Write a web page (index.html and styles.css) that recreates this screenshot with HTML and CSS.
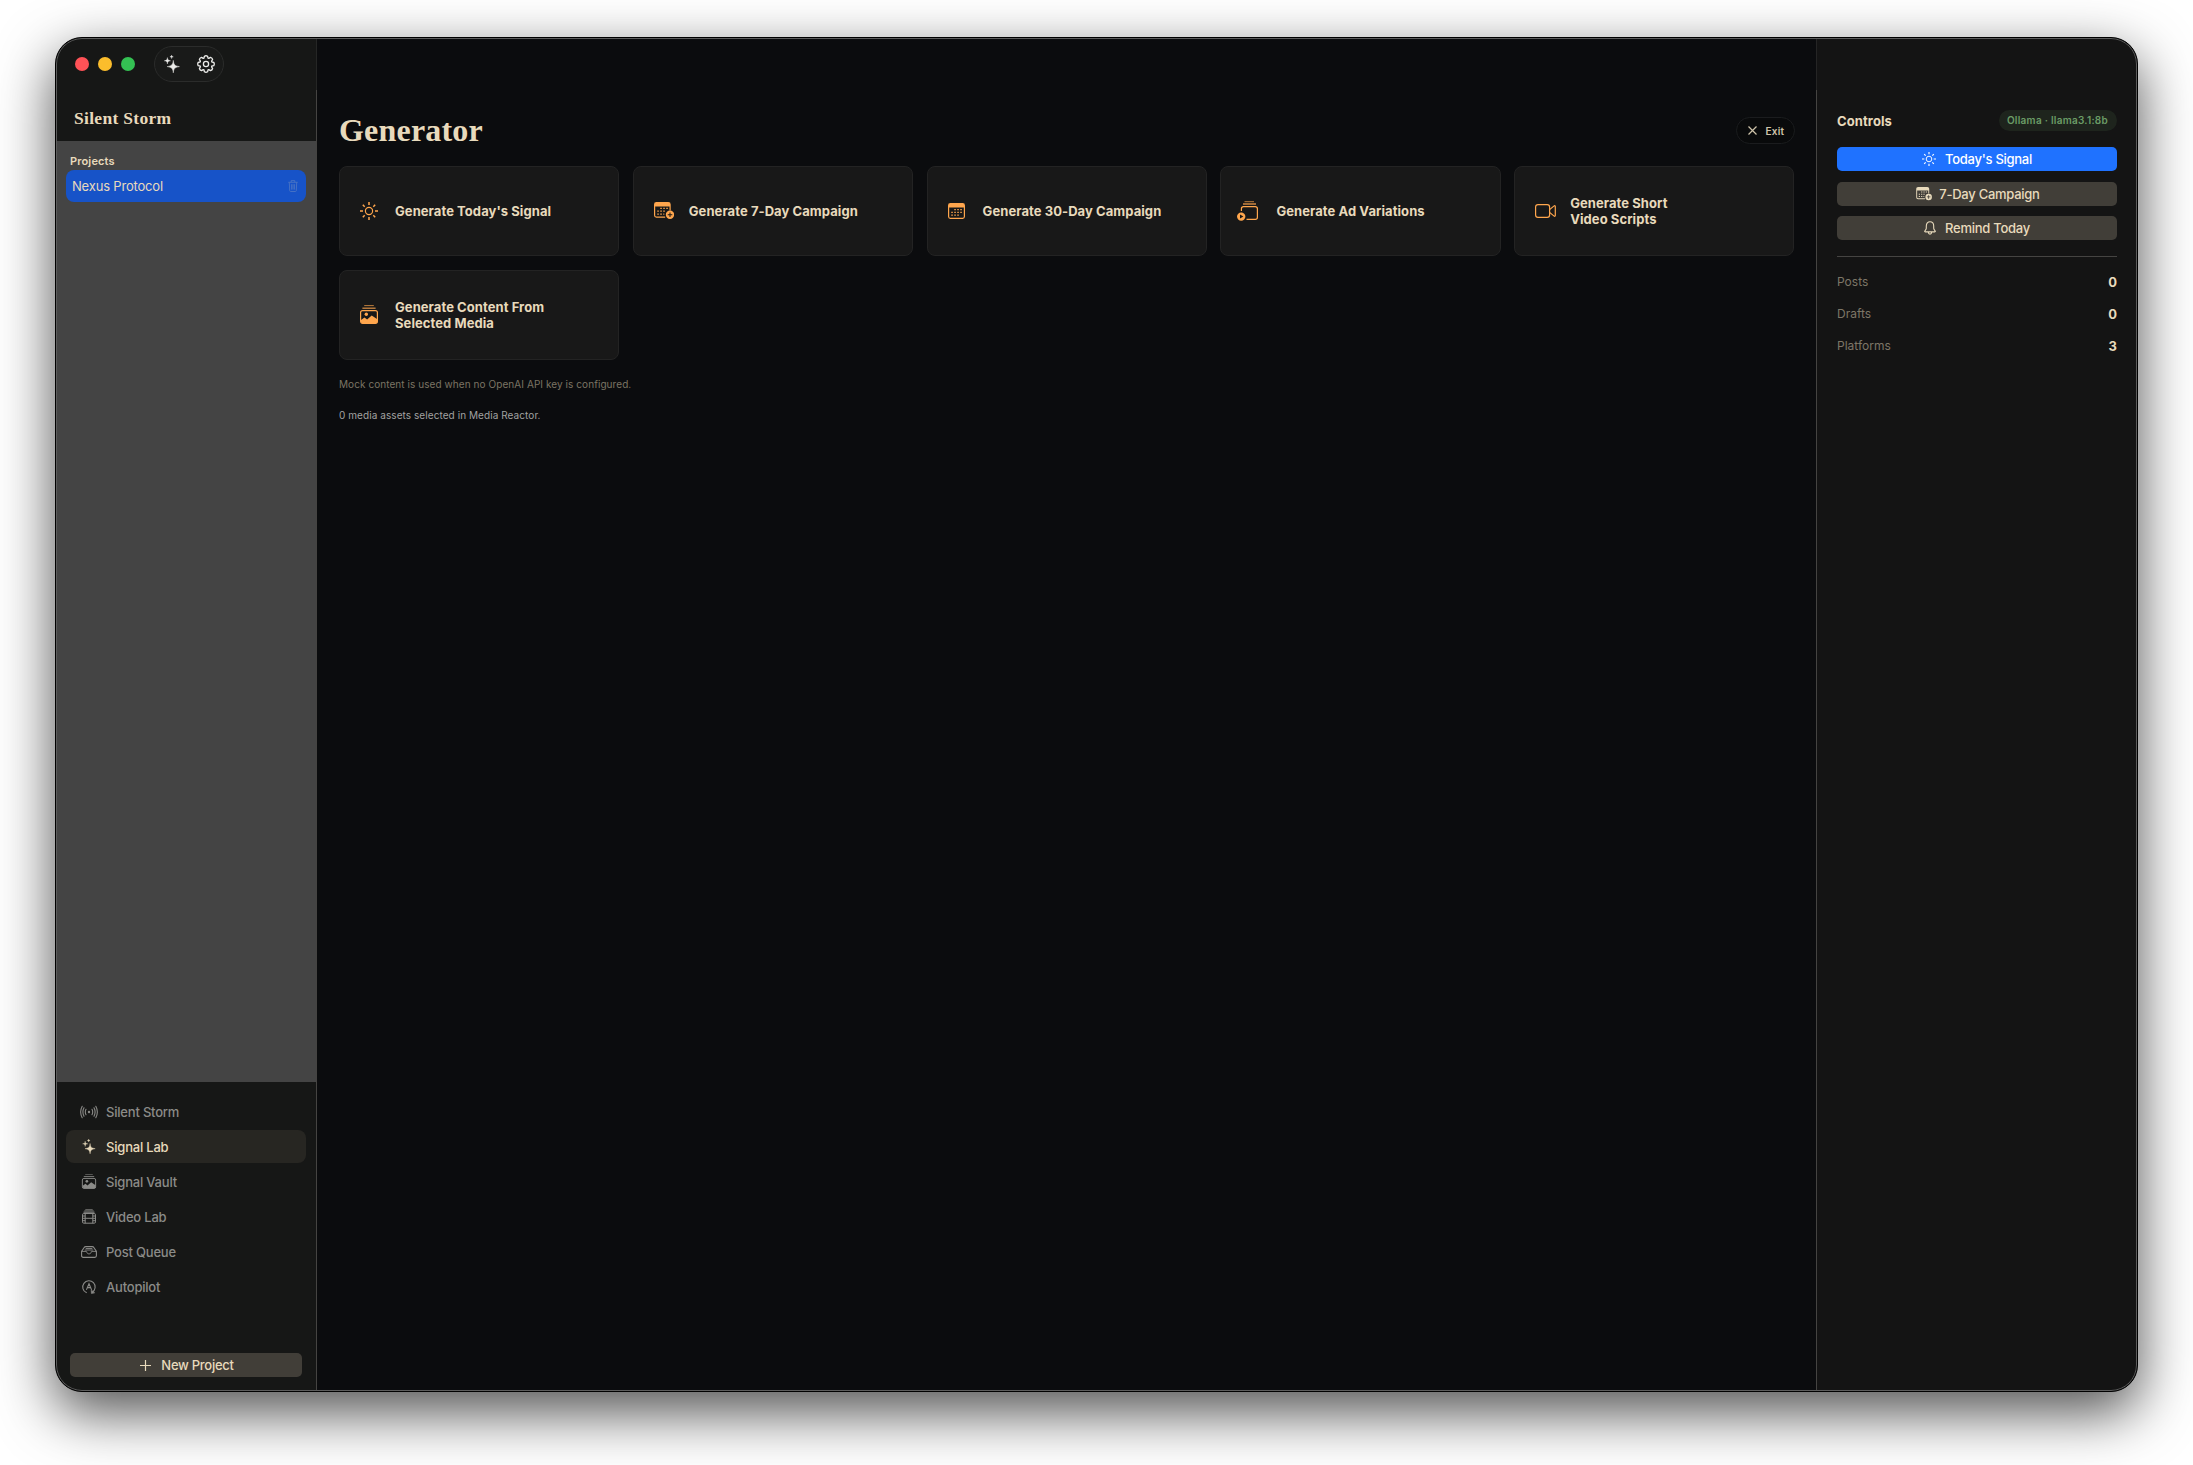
FILE: index.html
```html
<!DOCTYPE html>
<html lang="en">
<head>
    <meta charset="UTF-8">
    <title>Silent Storm</title>
    <link rel="stylesheet" href="styles.css">
</head>
<body>
    <svg class="sprite" width="0" height="0">
        <symbol id="sparkles" viewBox="0 0 16 18">
            <path fill="currentColor" d="M9.3 5.4C9.8 9.6 10.5 10.8 15.4 11.6C10.5 12.4 9.8 13.7 9.3 17.8C8.8 13.7 8.1 12.4 3.2 11.6C8.1 10.8 8.8 9.6 9.3 5.4Z" stroke="currentColor" stroke-width=".5"/>
            <path fill="currentColor" d="M3.4 2.6C3.7 4.9 4 5.3 6.5 5.8C4 6.2 3.7 6.7 3.4 9C3.1 6.7 2.8 6.2 .3 5.8C2.8 5.3 3.1 4.9 3.4 2.6Z" stroke="currentColor" stroke-width=".4"/>
            <path fill="currentColor" d="M7.6 0C7.8 1.3 8 1.6 9.3 1.8C8 2 7.8 2.3 7.6 3.6C7.4 2.3 7.2 2 5.9 1.8C7.2 1.6 7.4 1.3 7.6 0Z" stroke="currentColor" stroke-width=".4"/>
        </symbol>
        <symbol id="sun" viewBox="0 0 18 18">
            <circle cx="9" cy="9" r="3.6" fill="none" stroke="currentColor" stroke-width="1.2"/>
            <path fill="none" stroke="currentColor" stroke-width="1.5" d="M9 0v3M9 15v3M0 9h3M15 9h3M2.8 2.8l1.9 1.9M13.3 13.3l1.9 1.9M2.8 15.2l1.9-1.9M13.3 4.7l1.9-1.9"/>
        </symbol>
        <symbol id="calendar-plus" viewBox="0 0 20 18">
            <path fill="currentColor" d="M2.4 0h11.9a2.4 2.4 0 0 1 2.4 2.4v6h-1.2V4.6H1.2v8.6c0 .8.5 1.3 1.3 1.3h8.7v1.2H2.4A2.4 2.4 0 0 1 0 13.3V2.4A2.4 2.4 0 0 1 2.4 0z"/>
            <path stroke="currentColor" stroke-width="1.3" stroke-dasharray="1.5 1.5" d="M6.3 6.3h7.5M3.3 9.2h9M3.3 12.1h7"/>
            <path fill="currentColor" fill-rule="evenodd" d="M16 8.6a4.2 4.2 0 1 1 0 8.4a4.2 4.2 0 0 1 0-8.400zM15.5 10.500v1.800h-1.800v1h1.800v1.800h1v-1.800h1.800v-1h-1.800v-1.800z"/>
        </symbol>
        <symbol id="stack-image" viewBox="0 0 18 19">
            <path fill="none" stroke="currentColor" stroke-width="1" opacity=".7" d="M4.2 .6h9.600"/>
            <path fill="none" stroke="currentColor" stroke-width="1.3" opacity=".8" d="M2.4 3.2h13.200"/>
            <rect x=".6" y="5.6" width="16.8" height="12.7" rx="2" fill="none" stroke="currentColor" stroke-width="1.2"/>
            <circle cx="6.3" cy="9.3" r="1.7" fill="currentColor"/>
            <path fill="currentColor" d="M1 15l3.500-2.500 2.600 2 4.600-4 5.700 3.800v2.200c0 1-.6 1.500-1.500 1.500H2.500c-.9 0-1.500-.5-1.500-1.500z"/>
        </symbol>
    </svg>

    <div class="window">
        <aside class="sidebar">
            <div class="titlebar">
                <span class="light light-red"></span>
                <span class="light light-yellow"></span>
                <span class="light light-green"></span>
                <div class="toolbar">
                    <svg width="16" height="18"><use href="#sparkles"/></svg>
                    <svg width="18" height="18" viewBox="0 0 18 18" fill="none" stroke="currentColor" stroke-width="1.3" stroke-linejoin="round">
                        <path d="M7.4 1.2Q9 .3 10.6 1.2L11 3.1L11.8 3.4L13.5 2.4Q15.2 2.9 15.6 4.5L14.6 6.2L14.9 7L16.8 7.4Q17.7 9 16.8 10.6L14.9 11L14.6 11.8L15.6 13.5Q15.2 15.2 13.5 15.6L11.8 14.6L11 14.9L10.6 16.8Q9 17.7 7.4 16.8L7 14.9L6.2 14.6L4.5 15.6Q2.8 15.2 2.4 13.5L3.4 11.8L3.1 11L1.2 10.6Q.3 9 1.2 7.4L3.1 7L3.4 6.2L2.4 4.5Q2.8 2.8 4.5 2.4L6.2 3.4L7 3.1Z"/>
                        <circle cx="9" cy="9" r="2.6"/>
                    </svg>
                </div>
            </div>
            <div class="brand">Silent Storm</div>
            <div class="projects">
                <div class="projects-label">Projects</div>
                <div class="project">
                    <span>Nexus Protocol</span>
                    <svg width="10" height="12" viewBox="0 0 10 12" fill="none" stroke="currentColor" stroke-width=".9">
                        <path d="M.3 2.3h9.4M3.2 2.3V.6h3.600v1.700M1.300 2.300l.4 8.400c0 .5.400.8.900.8h4.800c.5 0 .9-.3.900-.8l.4-8.400M3.600 4.200v5.400M5 4.200v5.400M6.400 4.200v5.400"/>
                    </svg>
                </div>
            </div>
            <nav class="nav">
                <a class="nav-item">
                    <svg width="18" height="14" viewBox="0 0 18 14" fill="none" stroke="currentColor" stroke-width="1.1" stroke-linecap="round">
                        <circle cx="9" cy="7" r="1.2" fill="currentColor" stroke="none"/>
                        <path d="M6 4.3Q4.6 7 6 9.7M12 4.3Q13.4 7 12 9.7M4 2.8Q1.8 7 4 11.2M14 2.8Q16.2 7 14 11.2M2.2 1.3Q-.9 7 2.2 12.7M15.8 1.3Q18.9 7 15.8 12.7"/>
                    </svg>
                    <span>Silent Storm</span>
                </a>
                <a class="nav-item active">
                    <svg width="13" height="15"><use href="#sparkles"/></svg>
                    <span>Signal Lab</span>
                </a>
                <a class="nav-item">
                    <svg width="14" height="15"><use href="#stack-image"/></svg>
                    <span>Signal Vault</span>
                </a>
                <a class="nav-item">
                    <svg width="14" height="15" viewBox="0 0 14 15" fill="none" stroke="currentColor">
                        <path stroke-width="1" opacity=".7" d="M3.3 .6h7.400M2.300 1.800h9.400"/>
                        <path stroke-width="1.4" opacity=".8" d="M1.5 3.2h11"/>
                        <rect x=".5" y="4.5" width="13" height="9.7" rx="1.3"/>
                        <path d="M3.2 4.5v9.700M10.800 4.500v9.700M3.200 9.300h7.600M.5 7h2.700M.5 9.300h2.700M.5 11.700h2.700M10.800 7h2.700M10.800 9.300h2.700M10.800 11.700h2.700"/>
                    </svg>
                    <span>Video Lab</span>
                </a>
                <a class="nav-item">
                    <svg width="16" height="12" viewBox="0 0 16 12" fill="none" stroke="currentColor" stroke-width="1.1" stroke-linejoin="round">
                        <path d="M.6 5.4L3 1.7C3.5.9 4 .6 4.8.6h6.400c.8 0 1.300.3 1.800 1.100l2.400 3.700v4.400c0 1-.6 1.600-1.600 1.600H2.200c-1 0-1.600-.6-1.600-1.600z"/>
                        <path d="M.6 5.4h4.700c.3 0 .5.200.5.500 0 1.100.9 2 2.200 2s2.200-.9 2.200-2c0-.3.200-.5.500-.5h4.700M4.700 2.500h6.600M3.700 4h8.600" stroke-width=".9"/>
                    </svg>
                    <span>Post Queue</span>
                </a>
                <a class="nav-item">
                    <svg width="14" height="14" viewBox="0 0 14 14" fill="none" stroke="currentColor" stroke-width="1.1" stroke-linecap="round">
                        <path d="M4.3 12.6A6.2 6.2 0 1 1 10.3 12.2M4.6 9.4L7 3.7l2.400 5.700M5.400 7.600h3.200"/>
                        <path fill="currentColor" stroke-width=".6" d="M9.2 10.2l.2 3.300 3-.6z"/>
                    </svg>
                    <span>Autopilot</span>
                </a>
            </nav>
            <button class="button new-project">
                <svg width="11" height="11" viewBox="0 0 11 11" stroke="currentColor" stroke-width="1.2"><path d="M5.5 0v11M0 5.5h11"/></svg>
                <span>New Project</span>
            </button>
        </aside>

        <main class="main">
            <div class="main-header">
                <h1>Generator</h1>
                <button class="exit">
                    <svg width="9" height="9" viewBox="0 0 9 9" stroke="currentColor" stroke-width="1.2"><path d="M.5 .5l8 8M8.5 .5l-8 8"/></svg>
                    <span>Exit</span>
                </button>
            </div>
            <div class="cards">
                <div class="card">
                    <div class="card-icon"><svg width="18" height="18"><use href="#sun"/></svg></div>
                    <span>Generate Today's Signal</span>
                </div>
                <div class="card">
                    <div class="card-icon icon-week"><svg width="20" height="18"><use href="#calendar-plus"/></svg></div>
                    <span>Generate 7-Day Campaign</span>
                </div>
                <div class="card">
                    <div class="card-icon">
                        <svg width="17" height="16" viewBox="0 0 17 16">
                            <path fill="currentColor" fill-rule="evenodd" d="M2.4 0h12.2A2.4 2.4 0 0 1 17 2.4v11.200a2.4 2.4 0 0 1-2.4 2.4H2.4A2.4 2.4 0 0 1 0 13.600V2.4A2.4 2.4 0 0 1 2.4 0zM1.200 4.600v8.900c0 .8.500 1.300 1.300 1.300h12c.8 0 1.300-.5 1.300-1.300V4.600z"/>
                            <path stroke="currentColor" stroke-width="1.3" stroke-dasharray="1.5 1.5" d="M6.3 6.6h7.500M3.300 9.400h10.500M3.300 12.200h7.500"/>
                        </svg>
                    </div>
                    <span>Generate 30-Day Campaign</span>
                </div>
                <div class="card">
                    <div class="card-icon icon-ads">
                        <svg width="21" height="20" viewBox="0 0 21 20" fill="none" stroke="currentColor">
                            <path opacity=".7" d="M7.5 .7h9.500"/>
                            <path stroke-width="1.3" opacity=".8" d="M6 3h13"/>
                            <path stroke-width="1.2" d="M4.4 10V7.8c0-1.300.8-2.100 2.100-2.100h11.800c1.300 0 2.100.8 2.100 2.100v8.400c0 1.300-.8 2.100-2.100 2.100H9.500"/>
                            <path fill="currentColor" fill-rule="evenodd" stroke="none" d="M4.2 11.4a4.2 4.2 0 1 1 0 8.400a4.2 4.2 0 0 1 0-8.400zM3 13.600v4l3.400-2z"/>
                        </svg>
                    </div>
                    <span>Generate Ad Variations</span>
                </div>
                <div class="card">
                    <div class="card-icon icon-video">
                        <svg width="21" height="14" viewBox="0 0 21 14" fill="none" stroke="currentColor" stroke-width="1.2" stroke-linejoin="round">
                            <rect x=".6" y=".6" width="14" height="12.8" rx="2.4"/>
                            <path d="M14.6 5.6l4.500-3.700c.6-.4 1.200-.2 1.200.5v9.200c0 .7-.6.900-1.200.5l-4.500-3.700"/>
                        </svg>
                    </div>
                    <span>Generate Short<br>Video Scripts</span>
                </div>
                <div class="card">
                    <div class="card-icon icon-media"><svg width="18" height="19"><use href="#stack-image"/></svg></div>
                    <span>Generate Content From<br>Selected Media</span>
                </div>
            </div>
            <p class="note">Mock content is used when no OpenAI API key is configured.</p>
            <p class="note selected">0 media assets selected in Media Reactor.</p>
        </main>

        <aside class="controls">
            <div class="controls-titlebar"></div>
            <div class="controls-header">
                <h2>Controls</h2>
                <div class="badge">Ollama · llama3.1:8b</div>
            </div>
            <button class="button primary">
                <svg width="14" height="14"><use href="#sun"/></svg>
                <span>Today's Signal</span>
            </button>
            <button class="button campaign">
                <svg width="16" height="14"><use href="#calendar-plus"/></svg>
                <span>7-Day Campaign</span>
            </button>
            <button class="button">
                <svg width="12" height="14" viewBox="0 0 12 14" fill="none" stroke="currentColor" stroke-width="1.1" stroke-linejoin="round">
                    <path d="M.6 10.3c0-.5 1.700-1.600 1.700-3.100V5.100C2.300 2.500 3.800.8 6 .8s3.700 1.700 3.700 4.300v2.100c0 1.500 1.700 2.600 1.700 3.100 0 .4-.2.600-.7.600H1.300c-.5 0-.7-.2-.7-.6zM4.300 11.200c.1 1.200.8 1.900 1.700 1.900s1.600-.7 1.700-1.900"/>
                </svg>
                <span>Remind Today</span>
            </button>
            <div class="stats">
                <div class="stat"><span>Posts</span><b>0</b></div>
                <div class="stat"><span>Drafts</span><b>0</b></div>
                <div class="stat"><span>Platforms</span><b>3</b></div>
            </div>
        </aside>
    </div>
</body>
</html>
```

FILE: styles.css
```css
* {
    box-sizing: border-box;
}
body {
    margin: 0;
    padding: 37px 55px 0;
    height: 1465px;
    overflow: hidden;
    background: #fff;
    font-family: Inter, "Liberation Sans", sans-serif;
    font-size: 13px;
    color: #e8dabc;
}
.sprite {
    position: absolute;
}
svg {
    display: block;
    flex: none;
}
h1, h2, p {
    margin: 0;
}
.window {
    display: flex;
    width: 2083px;
    height: 1355px;
    border: 1px solid #000;
    border-radius: 27px;
    overflow: hidden;
    position: relative;
    background: #0b0c0e;
    box-shadow: 0 20px 56px 1px rgba(0, 0, 0, 0.68);
}
/* light rim just inside the dark window edge */
.window::after {
    content: "";
    position: absolute;
    inset: 0;
    border: 1px solid #5c5c5c;
    border-radius: 26px;
    pointer-events: none;
}
.sidebar {
    display: flex;
    flex-direction: column;
    width: 261px;
    background: #161716;
    border-right: 1px solid #454442;
}
/* covers the divider, which is fainter along the title bar */
.titlebar {
    display: flex;
    align-items: center;
    height: 52px;
    margin-right: -1px;
    padding-left: 19px;
    gap: 9px;
    border-right: 1px solid #252625;
}
.light {
    width: 14px;
    height: 14px;
    border-radius: 50%;
}
.light-red {
    background: #ff5257;
}
.light-yellow {
    background: #fbbd2c;
}
.light-green {
    background: #34c153;
}
.toolbar {
    display: flex;
    align-items: center;
    justify-content: space-between;
    width: 70px;
    height: 36px;
    margin-left: 10px;
    padding: 0 8px 0 9px;
    border: 1px solid #2b2c2b;
    border-radius: 18px;
    background: #191a19;
    color: #ececea;
}
.brand {
    height: 51px;
    padding-left: 18px;
    font-family: "Liberation Serif", serif;
    font-size: 17.5px;
    font-weight: bold;
    letter-spacing: 0.3px;
    line-height: 56px;
}
.projects {
    height: 941px;
    padding: 13px 10px 0 10px;
    background: #444;
}
.projects-label {
    padding-left: 4px;
    font-size: 11px;
    font-weight: 600;
    letter-spacing: 0.15px;
    line-height: 14px;
    margin-bottom: 2px;
}
.project {
    display: flex;
    align-items: center;
    justify-content: space-between;
    height: 32px;
    padding: 0 8px 0 6px;
    border-radius: 8px;
    background: #1753c8;
    letter-spacing: -0.18px;
}
.project svg {
    color: #4a74c4;
}
.nav {
    display: flex;
    flex-direction: column;
    padding: 13px 10px 0 10px;
    gap: 2px;
}
.nav-item {
    display: flex;
    align-items: center;
    height: 33px;
    padding-left: 14px;
    border-radius: 8px;
    font-weight: 500;
    letter-spacing: -0.2px;
    color: #8b8b88;
}
.nav-item svg {
    width: 18px;
    margin-right: 8px;
}
.nav-item.active {
    background: #272622;
    color: #e8dabc;
}
.button {
    display: flex;
    align-items: center;
    justify-content: center;
    height: 24px;
    padding: 0;
    gap: 9px;
    border: none;
    border-radius: 5px;
    background: #413e38;
    color: #e8dabc;
    font-family: inherit;
    font-size: 13px;
    font-weight: 500;
    letter-spacing: -0.27px;
}
.new-project {
    margin: auto 14px 14px;
    padding-left: 2px;
    gap: 10px;
}
.campaign {
    gap: 7px;
    padding-left: 2px;
}
.main {
    width: 1499px;
    padding: 74px 21.5px 0 22px;
}
.main-header {
    display: flex;
    align-items: center;
    justify-content: space-between;
    height: 37px;
}
h1 {
    font-family: "Liberation Serif", serif;
    font-size: 32px;
    letter-spacing: 0.2px;
    line-height: 37px;
}
.exit {
    display: flex;
    align-items: center;
    width: 59px;
    height: 27px;
    padding: 0 0 0 11px;
    gap: 9px;
    border: 1px solid #1b1c1e;
    border-radius: 14px;
    background: #090a0b;
    color: #cfc4aa;
    font-family: inherit;
    font-size: 10px;
    font-weight: 600;
    letter-spacing: 0.2px;
}
.cards {
    display: grid;
    grid-template-columns: repeat(5, 1fr);
    gap: 14px 13.5px;
    margin-top: 17px;
}
.card {
    display: flex;
    align-items: center;
    height: 90px;
    padding-left: 14px;
    border: 1px solid #232323;
    border-radius: 8px;
    background: #181818;
    font-weight: 700;
    letter-spacing: 0.07px;
    line-height: 16px;
}
.card-icon {
    display: flex;
    justify-content: center;
    width: 30px;
    margin-right: 11px;
    color: #ffa64d;
}
.icon-week {
    padding-left: 2px;
}
.icon-ads {
    padding-right: 5px;
}
.icon-video {
    padding-left: 3px;
}
.icon-media {
    padding-bottom: 1px;
}
.note {
    margin-top: 17px;
    font-size: 10px;
    letter-spacing: 0.07px;
    line-height: 14px;
    color: #7b7464;
}
.selected {
    color: #a2a2a1;
}
.controls {
    display: flex;
    flex-direction: column;
    flex: 1;
    padding: 0 20px;
    border-left: 1px solid #454442;
    background: #141414;
}
.controls-titlebar {
    height: 52px;
    margin: 0 -20px 20px -21px;
    border-left: 1px solid #252525;
}
.controls-header {
    display: flex;
    align-items: center;
    justify-content: space-between;
    height: 21px;
    margin-bottom: 16px;
}
h2 {
    font-size: 13px;
    letter-spacing: 0.1px;
}
.badge {
    height: 21px;
    padding: 0 9px 0 8px;
    border-radius: 11px;
    background: #1e241d;
    color: #6b9c66;
    font-size: 10px;
    font-weight: 600;
    letter-spacing: 0.26px;
    line-height: 21px;
}
.controls .button {
    margin-bottom: 10.5px;
}
.controls .primary {
    background: #1f72ff;
    color: #fff;
}
.stats {
    margin-top: 5px;
    padding-top: 9px;
    border-top: 1px solid #454442;
}
.stat {
    display: flex;
    align-items: center;
    justify-content: space-between;
    height: 32px;
    font-size: 12px;
    color: #7d7667;
}
.stat b {
    font-size: 13px;
    color: #e8dabc;
}
```
